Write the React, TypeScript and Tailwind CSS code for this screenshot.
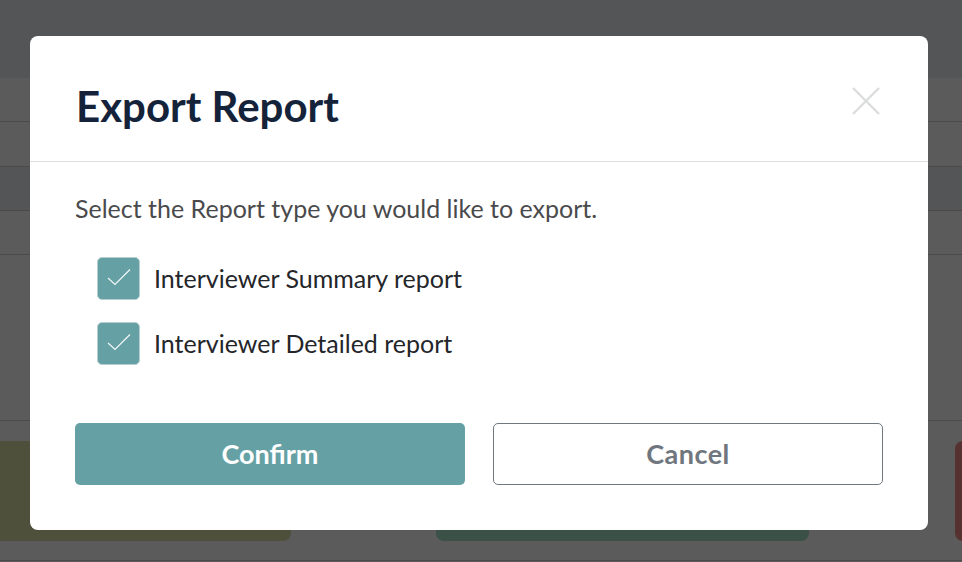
const Row = ({ className }: { className: string }) => <div className={className} />;

function CheckRow({ label }: { label: string }) {
  return (
    <label className="flex items-center gap-[14px] h-11">
      <span className="flex items-center justify-center w-[43px] h-[43px] rounded-[5px] bg-[#65a1a4] border border-[#b5cfd0]">
        <svg width="26" height="20" viewBox="0 0 26 20" fill="none" stroke="#f2f7f7" strokeWidth="1.2">
          <path d="M2 10 L9 16.5 L24 1.5" />
        </svg>
      </span>
      <span className="text-[25px] leading-none text-[#24262a]">{label}</span>
    </label>
  );
}

export default function App() {
  return (
    <div className="relative w-[962px] h-[562px] overflow-hidden bg-[#5b5b5b] font-['Lato','Liberation_Sans',sans-serif]">
      <Row className="h-[78px] bg-[#545556]" />
      <Row className="h-[44px] bg-[#5b5b5b] border-b border-[#4a4a4a]" />
      <Row className="h-[45px] bg-[#5b5b5b] border-b border-[#4a4a4a]" />
      <Row className="h-[44px] bg-[#545556] border-b border-[#4a4a4a]" />
      <Row className="h-[44px] bg-[#5b5b5b] border-b border-[#4a4a4a]" />
      <Row className="h-[166px] bg-[#5b5b5b] border-b border-[#4a4a4a]" />
      <div className="flex items-start h-[100px] mt-[20px]">
        <div className="w-[291px] h-[100px] shrink-0 bg-[#4e503c] rounded-br-lg" />
        <div className="w-[373px] h-[100px] shrink-0 ml-[145px] bg-[#3b5047] rounded-b-lg" />
        <div className="w-[10px] h-[100px] shrink-0 ml-[146px] bg-[#55322f] rounded-l-lg" />
      </div>
      <Row className="h-[1px] mt-[19px] bg-[#4a4a4a]" />

      <div className="absolute left-[30px] top-[36px] w-[898px] h-[494px] bg-white rounded-[8px] flex flex-col">
        <div className="h-[126px] border-b border-[#dfdfdf] flex justify-between pl-[46px] pr-[48px] shrink-0">
          <h1 className="mt-[41px] text-[42px] leading-[58px] font-bold text-[#14233a] h-fit">Export Report</h1>
          <svg className="mt-[51px]" width="28" height="28" viewBox="0 0 28 28" stroke="#dcdddd" strokeWidth="2.4">
            <path d="M1 1 L27 27 M27 1 L1 27" />
          </svg>
        </div>
        <div className="flex-1 px-[45px] pt-[31px] flex flex-col">
          <p className="text-[25px] leading-[30px] text-[#4a4a4c]">Select the Report type you would like to export.</p>
          <div className="ml-[22px] mt-[33px] flex flex-col gap-[21px]">
            <CheckRow label="Interviewer Summary report" />
            <CheckRow label="Interviewer Detailed report" />
          </div>
          <div className="flex gap-7 mt-[58px]">
            <button className="w-[390px] h-[62px] rounded-[5px] bg-[#65a1a4] text-white text-[27px] font-bold">Confirm</button>
            <button className="w-[390px] h-[62px] rounded-[5px] bg-white border border-[#6f777f] text-[#6f767e] text-[27px] font-bold tracking-[0.5px]">Cancel</button>
          </div>
        </div>
      </div>
    </div>
  );
}
